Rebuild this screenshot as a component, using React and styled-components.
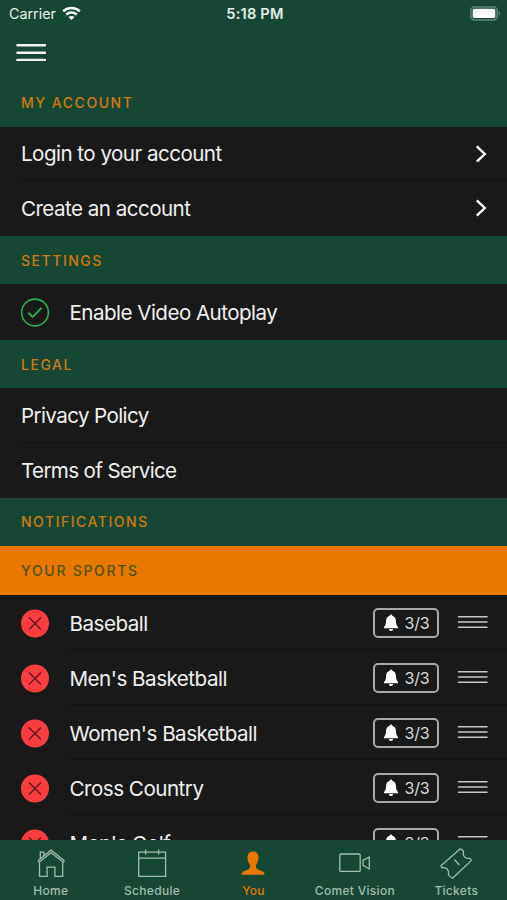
import React, {Component} from 'react';
import styled, {createGlobalStyle} from 'styled-components';

const GlobalStyle = createGlobalStyle`
* {
    box-sizing: border-box;
}
body {
    margin: 0;
    background: #191919;
    font-family: Inter, "Liberation Sans", sans-serif;
}
`;

const sports = ['Baseball', "Men's Basketball", "Women's Basketball", 'Cross Country', "Men's Golf"];

const Chevron = () => (
    <svg width="13" height="18" viewBox="0 0 13 18" fill="none" stroke="#fff" strokeWidth="2.4">
        <path d="M1.8 1.4 L9.8 9 L1.8 16.6" />
    </svg>
);

const Lines = ({width, height, weight, color}) => (
    <svg width={width} height={height} stroke={color} strokeWidth={weight} strokeLinecap="round">
        <path d={`M1.5 ${weight / 2} H${width - 1} M1.5 ${height / 2} H${width - 1} M1.5 ${height - weight / 2} H${width - 1}`} />
    </svg>
);

const Check = () => (
    <svg width="29" height="29" viewBox="0 0 29 29" fill="none" stroke="#2bb24c" strokeWidth="1.6">
        <circle cx="14" cy="14.5" r="13.4" />
        <path d="M7.2 14.8 L11.7 19 L20.5 9.8" strokeWidth="1.9" />
    </svg>
);

const Remove = () => (
    <svg width="29" height="29" viewBox="0 0 29 29">
        <circle cx="14" cy="14.5" r="14" fill="#fc3d3e" />
        <path d="M8 8.5 L20 20.5 M20 8.5 L8 20.5" stroke="#5a1a1c" strokeWidth="1.4" />
    </svg>
);

const Bell = () => (
    <svg width="16" height="18" viewBox="0 0 16 18" fill="#fff">
        <path d="M8 0.4 C8.9 0.4 9.3 1 9.3 1.7 C11.6 2.3 12.8 4.2 12.9 6.6 C13 9.6 13.4 11.6 15.1 13.3 V14.2 H0.9 V13.3 C2.6 11.6 3 9.6 3.1 6.6 C3.2 4.2 4.4 2.3 6.7 1.7 C6.7 1 7.1 0.4 8 0.4 Z" />
        <path d="M5.9 15 H10.1 C10 16.3 9.2 17 8 17 C6.8 17 6 16.3 5.9 15 Z" />
    </svg>
);

const Wifi = () => (
    <svg width="19" height="15" viewBox="0 0 19 15" fill="none" stroke="#f4f8f6" strokeWidth="2.5">
        <path d="M1.2 5.4 C5.8 0.9 13.2 0.9 17.8 5.4" />
        <path d="M4.2 8.7 C7.2 5.9 11.8 5.9 14.8 8.7" />
        <path d="M9.5 14 L6.4 11 C8.2 9.5 10.8 9.5 12.6 11 Z" fill="#f4f8f6" stroke="none" />
    </svg>
);

const Battery = () => (
    <svg width="31" height="15" viewBox="0 0 31 15">
        <rect x="0.9" y="0.9" width="26.2" height="13" rx="3.6" fill="none" stroke="#5f8675" strokeWidth="1.5" />
        <rect x="2.7" y="2.7" width="22.6" height="9.3" rx="1.6" fill="#fff" />
        <path d="M28.6 5.2 C30.8 6 30.8 8.8 28.6 9.6 Z" fill="#5f8675" />
    </svg>
);

const tabs = [
    {
        label: 'Home',
        icon: (
            <g>
                <path d="M4.5 14.5 V28.3 H12.1 V19.2 H19.9 V28.3 H27.7 V14.5" />
                <path d="M3 12.8 L16 2.2 L29.4 12.8 M3 12.8 L4.2 14.2 L16 4.8 L28.2 14.2 L29.4 12.8" />
                <path d="M5.3 10.8 V4.2 H8.9 V8" />
            </g>
        ),
    },
    {
        label: 'Schedule',
        icon: (
            <g>
                <path d="M2.7 4.2 H29.6 V28.3 H2.7 Z M2.7 10.2 H29.6" />
                <path d="M9.6 1.5 V6.6 M22.6 1.5 V6.6" />
            </g>
        ),
    },
    {
        label: 'You',
        active: true,
        icon: (
            <path fill="#e87800" stroke="none" d="M16 3.4 C19.8 3.4 21.6 5.8 21.5 9.8 C21.4 12.8 20.5 14.8 19.2 16.6 C18.5 18.8 19 20.8 21.4 21.8 C24.6 23.1 27.3 23.3 27.6 26.8 H4.4 C4.7 23.3 7.4 23.1 10.6 21.8 C13 20.8 13.5 18.8 12.8 16.6 C11.5 14.8 10.6 12.8 10.5 9.8 C10.4 5.8 12.2 3.4 16 3.4 Z" />
        ),
    },
    {
        label: 'Comet Vision',
        icon: (
            <g>
                <rect x="0.8" y="6" width="20.4" height="17.4" rx="1.2" />
                <path d="M24 12.3 L30.3 9 V21 L24 17.4 Z" />
            </g>
        ),
    },
    {
        label: 'Tickets',
        icon: (
            <g strokeLinejoin="round">
                <path d="M20.3 0.8 L1 17.7 C1.3 19.3 2 20 3.4 19.7 C6.2 19.2 9.2 22.3 8.5 25.5 C8.2 27 9.8 28.8 12.5 30.2 L31.2 12.6 C31 11 30 10.2 28.6 10.4 C25.4 10.8 22.6 7.8 23.4 4.8 C23.8 3.2 22.3 1.6 20.3 0.8 Z" />
                <path d="M14.4 11.5 L19.4 17" />
            </g>
        ),
    },
];

class App extends Component {
    render() {
        return (
            <Screen>
                <GlobalStyle />
                <StatusBar>
                    <Carrier>Carrier <Wifi /></Carrier>
                    <Clock>5:18 PM</Clock>
                    <Power><Battery /></Power>
                </StatusBar>
                <NavBar>
                    <Lines width={30} height={17.4} weight={2.6} color="#eef5f1" />
                </NavBar>
                <Content>
                    <SectionTitle>MY ACCOUNT</SectionTitle>
                    <Row $divider>
                        <Label>Login to your account</Label>
                        <Chevron />
                    </Row>
                    <Row>
                        <Label>Create an account</Label>
                        <Chevron />
                    </Row>
                    <SectionTitle>SETTINGS</SectionTitle>
                    <Row $height="55.4px">
                        <IconBox><Check /></IconBox>
                        <Label>Enable Video Autoplay</Label>
                    </Row>
                    <SectionTitle>LEGAL</SectionTitle>
                    <Row $divider>
                        <Label $spacing="-0.62px">Privacy Policy</Label>
                    </Row>
                    <Row>
                        <Label $spacing="-0.65px">Terms of Service</Label>
                    </Row>
                    <SectionTitle>NOTIFICATIONS</SectionTitle>
                    <SectionTitle $accent>YOUR SPORTS</SectionTitle>
                    {sports.map(sport => (
                        <SportRow key={sport} $height="55px" $divider $inset="70px">
                            <IconBox><Remove /></IconBox>
                            <Label $spacing="-0.5px">{sport}</Label>
                            <AlertButton><Bell /> 3/3</AlertButton>
                            <Handle><Lines width={31} height={12} weight={1.6} color="#c8c8c8" /></Handle>
                        </SportRow>
                    ))}
                </Content>
                <TabBar>
                    {tabs.map(tab => (
                        <Tab key={tab.label} $active={tab.active}>
                            <svg width="32" height="32" viewBox="0 0 32 32" fill="none" stroke="#a3bdb0" strokeWidth="1.3">
                                {tab.icon}
                            </svg>
                            {tab.label}
                        </Tab>
                    ))}
                </TabBar>
            </Screen>
        );
    }
}

const Screen = styled.div`
display: flex;
flex-direction: column;
height: 900px;
width: 507px;
overflow: hidden;
background: #164734;
`;

const StatusBar = styled.header`
display: grid;
grid-template-columns: 1fr auto 1fr;
align-items: center;
flex: none;
height: 27px;
padding: 0 6px 0 9px;
color: #e6efea;
font-size: 14.3px;
`;

const Carrier = styled.div`
display: flex;
align-items: center;
gap: 6px;
`;

const Clock = styled.div`
font-weight: 600;
font-size: 14.6px;
letter-spacing: 0.2px;
`;

const Power = styled.div`
display: flex;
justify-content: flex-end;
`;

const NavBar = styled.nav`
display: flex;
align-items: center;
flex: none;
height: 51px;
padding-left: 16px;
`;

const Content = styled.main`
flex: 1;
min-height: 0;
overflow: hidden;
background: #191919;
`;

const SectionTitle = styled.h2`
display: flex;
align-items: center;
height: 48.6px;
margin: 0;
padding-left: 21px;
background: ${props => (props.$accent ? '#e87800' : '#164734')};
color: ${props => (props.$accent ? '#4f5415' : '#d17a10')};
font-size: 14px;
font-weight: 500;
letter-spacing: ${props => (props.$accent ? '1.7px' : '1.53px')};
`;

const Row = styled.div`
display: flex;
align-items: center;
height: ${props => props.$height || '54.6px'};
padding: 0 19px 0 21px;
background: ${props => (props.$divider
    ? `linear-gradient(#121212, #121212) ${props.$inset || '21px'} 100% / 100% 1px no-repeat #191919`
    : '#191919')};
`;

const SportRow = styled(Row)`
padding-top: 2px;
`;

const IconBox = styled.div`
display: flex;
width: 48.5px;
`;

const Label = styled.span`
flex: 1;
color: #f0f0f0;
font-size: 20.6px;
letter-spacing: ${props => props.$spacing || '-0.54px'};
white-space: nowrap;
`;

const AlertButton = styled.button`
display: flex;
align-items: center;
justify-content: center;
gap: 6px;
width: 66px;
height: 30px;
margin-right: 18px;
padding: 0;
border: 2px solid #a9a9a9;
border-radius: 5px;
background: transparent;
color: #dcdcdc;
font-family: inherit;
font-size: 16px;
letter-spacing: -0.2px;
`;

/* sits a touch above the row's centre line */
const Handle = styled.div`
display: flex;
padding-bottom: 2px;
`;

const TabBar = styled.footer`
display: grid;
grid-template-columns: repeat(5, 1fr);
flex: none;
height: 60px;
background: #164734;
`;

const Tab = styled.div`
display: flex;
flex-direction: column;
align-items: center;
padding-top: 8px;
color: ${props => (props.$active ? '#e87800' : '#a3bdb0')};
font-size: 12px;
font-weight: 500;
line-height: 22px;
letter-spacing: 0.3px;
`;

export default App;
